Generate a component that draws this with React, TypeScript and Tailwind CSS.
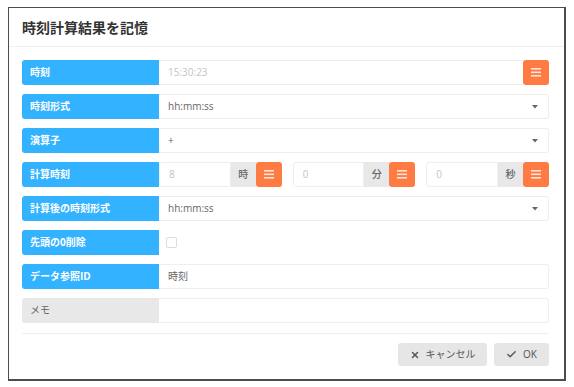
import { Check, X } from "lucide-react"

const font = { fontFamily: '"Open Sans", "Noto Sans CJK JP", sans-serif' }

function ListBtn() {
  return (
    <div className="flex h-full w-[26px] shrink-0 items-center justify-center rounded-[3px] bg-[#ff7b44]">
      <svg width="10" height="9" viewBox="0 0 10 9">
        <rect x="0" y="0" width="10" height="1.6" fill="#ffe3d6" />
        <rect x="0" y="3.5" width="10" height="1.6" fill="#ffe3d6" />
        <rect x="0" y="7" width="10" height="1.6" fill="#ffe3d6" />
      </svg>
    </div>
  )
}

function Caret() {
  return (
    <svg width="6" height="4" viewBox="0 0 6 4" className="mr-[10px]">
      <path d="M0 0 L6 0 L3 3.5 Z" fill="#666" />
    </svg>
  )
}

function Label({ text, gray }: { text: string; gray?: boolean }) {
  return (
    <div
      className={
        gray
          ? "flex w-[137px] shrink-0 items-center rounded-l-[3px] bg-[#e8e8e8] pl-[8px] text-[10px] text-[#666]"
          : "flex w-[137px] shrink-0 items-center rounded-l-[3px] bg-[#33b3ff] pl-[8px] text-[10px] font-bold text-white"
      }
    >
      {text}
    </div>
  )
}

function TimeGroup({ value, unit }: { value: string; unit: string }) {
  return (
    <div className="flex h-full">
      <div className="flex flex-1 items-center rounded-l-[3px] border border-[#eee] pl-[9px] text-[10px] text-[#c4c4c4]">
        {value}
      </div>
      <div className="flex w-[25px] items-center justify-center bg-[#e8e8e8] text-[10px] font-medium text-[#666]">
        {unit}
      </div>
      <ListBtn />
    </div>
  )
}

export default function App() {
  return (
    <div className="min-h-screen bg-white pl-[8px] pt-[7px]" style={font}>
      <div className="flex h-[374px] w-[558px] flex-col border border-r-2 border-b-2 border-[#4d4d4d] bg-white">
        <div className="flex h-[39px] shrink-0 items-center border-b border-[#efefef] pl-[13px] text-[14px] font-semibold text-[#333]">
          時刻計算結果を記憶
        </div>
        <div className="flex flex-col gap-[9px] pl-[13px] pr-[15px] pt-[13px]">
          <div className="flex h-[25px]">
            <Label text="時刻" />
            <div className="flex flex-1 items-center border-y border-[#eee] pl-[9px] text-[10px] text-[#c4c4c4]">15:30:23</div>
            <ListBtn />
          </div>
          <div className="flex h-[25px]">
            <Label text="時刻形式" />
            <div className="flex flex-1 items-center justify-between rounded-r-[3px] border border-l-0 border-[#eee] pl-[9px] text-[10px] text-[#666]">
              hh:mm:ss
              <Caret />
            </div>
          </div>
          <div className="flex h-[25px]">
            <Label text="演算子" />
            <div className="flex flex-1 items-center justify-between rounded-r-[3px] border border-l-0 border-[#eee] pl-[9px] text-[10px] text-[#666]">
              +
              <Caret />
            </div>
          </div>
          <div className="flex h-[25px]">
            <Label text="計算時刻" />
            <div className="grid flex-1 grid-cols-3 gap-[11px]">
              <TimeGroup value="8" unit="時" />
              <TimeGroup value="0" unit="分" />
              <TimeGroup value="0" unit="秒" />
            </div>
          </div>
          <div className="flex h-[25px]">
            <Label text="計算後の時刻形式" />
            <div className="flex flex-1 items-center justify-between rounded-r-[3px] border border-l-0 border-[#eee] pl-[9px] text-[10px] text-[#666]">
              hh:mm:ss
              <Caret />
            </div>
          </div>
          <div className="flex h-[25px]">
            <Label text="先頭の0削除" />
            <div className="flex flex-1 items-center pl-[7px]">
              <div className="h-[11px] w-[11px] rounded-[2px] border border-[#ddd] bg-white" />
            </div>
          </div>
          <div className="flex h-[25px]">
            <Label text="データ参照ID" />
            <div className="flex flex-1 items-center rounded-r-[3px] border border-l-0 border-[#eee] pl-[9px] text-[10px] text-[#666]">
              時刻
            </div>
          </div>
          <div className="flex h-[25px]">
            <Label text="メモ" gray />
            <div className="flex-1 rounded-r-[3px] border border-l-0 border-[#eee]" />
          </div>
        </div>
        <div className="mx-[13px] mr-[15px] mt-[10px] border-t border-[#efefef]" />
        <div className="flex justify-end gap-[7px] pr-[15px] pt-[9px]">
          <button className="flex h-[23px] w-[89px] items-center justify-center gap-[6px] rounded-[3px] bg-[#e6e6e6] text-[10px] text-[#555]">
            <X size={10} strokeWidth={3.5} />
            キャンセル
          </button>
          <button className="flex h-[23px] w-[55px] items-center justify-center gap-[6px] rounded-[3px] bg-[#e6e6e6] text-[10px] text-[#555]">
            <Check size={11} strokeWidth={3} />
            OK
          </button>
        </div>
      </div>
    </div>
  )
}
